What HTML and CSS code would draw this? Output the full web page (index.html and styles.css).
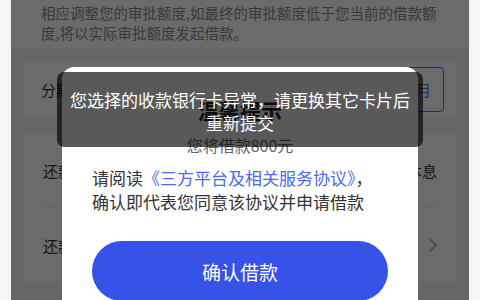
FILE: index.html
```html
<!DOCTYPE html>
<html lang="zh-CN">
<head>
    <meta charset="UTF-8">
    <meta name="viewport" content="width=device-width, initial-scale=1.0">
    <title>确认借款</title>
    <link rel="stylesheet" href="styles.css">
</head>
<body>
    <div class="phone">
        <!-- 借款页面 -->
        <div class="page">
            <p class="note">相应调整您的审批额度,如最终的审批额度低于您当前的借款额度,将以实际审批额度发起借款。</p>
            <div class="card term-card">
                <span class="label">分期期数</span>
                <span class="term-opt">12个月</span>
            </div>
            <div class="card list-card">
                <div class="row">
                    <span class="label">还款方式</span>
                    <span class="value">等额本息</span>
                </div>
                <div class="row">
                    <span class="label">还款计划</span>
                    <svg class="chev" width="8" height="14" viewBox="0 0 8 14"><path d="M1 1l6 6-6 6" fill="none" stroke="#999" stroke-width="1.3"/></svg>
                </div>
            </div>
        </div>

        <!-- 弹窗 -->
        <div class="mask"></div>
        <div class="dialog">
            <h2 class="dialog-title">温馨提示</h2>
            <p class="dialog-sub">您将借款800元</p>
            <p class="dialog-text">请阅读<a class="link">《三方平台及相关服务协议》</a>，确认即代表您同意该协议并申请借款</p>
            <button type="button" class="confirm-btn">确认借款</button>
        </div>

        <div class="toast">您选择的收款银行卡异常，请更换其它卡片后重新提交</div>
    </div>
</body>
</html>
```

FILE: styles.css
```css
html, body {
    margin: 0;
    padding: 0;
    height: 300px;
    overflow: hidden;
    background: #f5f5f5;
    font-family: "Noto Sans CJK SC", "Noto Sans", sans-serif;
}
.phone {
    position: relative;
    margin-left: 11px;
    width: 458px;
    height: 300px;
    overflow: hidden;
    background: #f2f2f2;
}
.page {
    padding: 0 12px;
}
.note {
    margin: 0 -12px;
    padding: 3px 14px 5px 30px;
    background: #fff;
    font-size: 14.5px;
    line-height: 20px;
    color: #888;
}
.card {
    background: #fff;
    border-radius: 8px;
    margin-top: 12px;
}
.term-card {
    height: 58px;
    display: flex;
    align-items: center;
    justify-content: space-between;
    padding: 0 13px 0 18px;
}
.label {
    font-size: 15px;
    color: #333;
}
.term-opt {
    height: 45px;
    box-sizing: border-box;
    display: flex;
    align-items: center;
    padding: 0 12px;
    border: 1px solid #4d6bea;
    border-radius: 4px;
    font-size: 15px;
    color: #4d6bea;
}
.list-card {
    margin-top: 15px;
    padding: 0 20px;
}
.row {
    height: 74px;
    display: flex;
    align-items: center;
    justify-content: space-between;
    border-bottom: 1px solid #eee;
}
.value {
    font-size: 15px;
    color: #333;
}
.mask {
    position: absolute;
    inset: 0;
    background: rgba(0, 0, 0, 0.58);
}
.dialog {
    position: absolute;
    left: 51px;
    top: 67px;
    width: 356px;
    height: 280px;
    box-sizing: border-box;
    padding: 28px 30px 0;
    background: #fff;
    border-radius: 12px;
    text-align: center;
}
.dialog-title {
    margin: 0;
    font-size: 21px;
    line-height: 30px;
    font-weight: bold;
    color: #222;
}
.dialog-sub {
    margin: 9px 0 0;
    font-size: 16px;
    line-height: 22px;
    color: #666;
}
.dialog-text {
    margin: 10px 0 0;
    text-align: left;
    font-size: 17px;
    line-height: 24px;
    color: #333;
}
.link {
    color: #4d6bea;
}
.confirm-btn {
    display: block;
    width: 100%;
    height: 60px;
    margin-top: 27px;
    border: none;
    border-radius: 30px;
    background: #3752e6;
    color: #fff;
    font-family: inherit;
    font-size: 19px;
}
.toast {
    position: absolute;
    left: 46px;
    top: 72px;
    width: 366px;
    box-sizing: border-box;
    padding: 16px 11px 13px;
    background: rgba(0, 0, 0, 0.65);
    border-radius: 7px;
    color: #fff;
    font-size: 17px;
    line-height: 23px;
    text-align: center;
}
```
